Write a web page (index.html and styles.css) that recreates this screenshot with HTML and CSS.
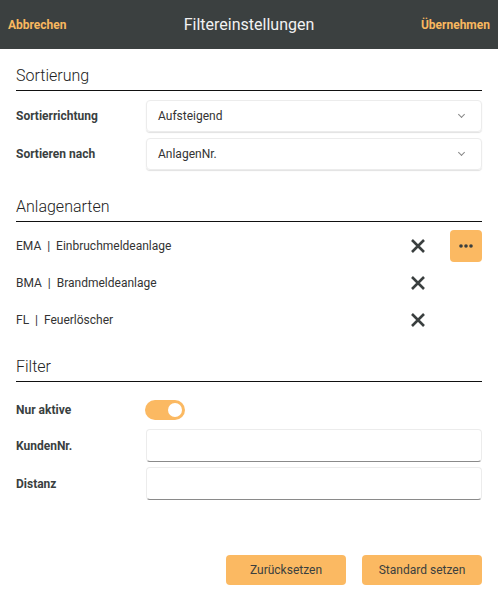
FILE: index.html
```html
<!DOCTYPE html>
<html lang="de">
<head>
  <meta charset="UTF-8" />
  <meta name="viewport" content="width=device-width, initial-scale=1.0" />
  <title>Filtereinstellungen</title>
  <link rel="stylesheet" href="styles.css">
</head>
<body>
  <header class="topbar">
    <a class="bar-link">Abbrechen</a>
    <h1>Filtereinstellungen</h1>
    <a class="bar-link">Übernehmen</a>
  </header>

  <main class="content">
    <section class="section sort">
      <h2>Sortierung</h2>
      <div class="fields">
        <div class="field">
          <label>Sortierrichtung</label>
          <div class="select">Aufsteigend <span class="chevron"></span></div>
        </div>
        <div class="field">
          <label>Sortieren nach</label>
          <div class="select">AnlagenNr. <span class="chevron"></span></div>
        </div>
      </div>
    </section>

    <section class="section kinds">
      <h2>Anlagenarten</h2>
      <ul class="types">
        <li>
          <span class="type-name">EMA&nbsp; | &nbsp;Einbruchmeldeanlage</span>
          <span class="remove"><svg width="16" height="16" viewBox="0 0 16 16"><path d="M2 2L14 14M14 2L2 14" stroke="#3a3f3f" stroke-width="2.6" fill="none"/></svg></span>
          <button class="more"><svg width="14" height="4" viewBox="0 0 14 4"><circle cx="2" cy="2" r="1.8"/><circle cx="7" cy="2" r="1.8"/><circle cx="12" cy="2" r="1.8"/></svg></button>
        </li>
        <li>
          <span class="type-name">BMA&nbsp; | &nbsp;Brandmeldeanlage</span>
          <span class="remove"><svg width="16" height="16" viewBox="0 0 16 16"><path d="M2 2L14 14M14 2L2 14" stroke="#3a3f3f" stroke-width="2.6" fill="none"/></svg></span>
          <span class="more-space"></span>
        </li>
        <li>
          <span class="type-name">FL&nbsp; | &nbsp;Feuerlöscher</span>
          <span class="remove"><svg width="16" height="16" viewBox="0 0 16 16"><path d="M2 2L14 14M14 2L2 14" stroke="#3a3f3f" stroke-width="2.6" fill="none"/></svg></span>
          <span class="more-space"></span>
        </li>
      </ul>
    </section>

    <section class="section">
      <h2>Filter</h2>
      <div class="fields">
        <div class="field toggle-row">
          <label>Nur aktive</label>
          <span class="toggle"><span class="knob"></span></span>
        </div>
        <div class="field input-row">
          <label>KundenNr.</label>
          <input type="text" class="text-input" />
        </div>
        <div class="field">
          <label>Distanz</label>
          <input type="text" class="text-input" />
        </div>
      </div>
    </section>

    <div class="actions">
      <button class="btn">Zurücksetzen</button>
      <button class="btn">Standard setzen</button>
    </div>
  </main>
</body>
</html>
```

FILE: styles.css
```css
* { box-sizing: border-box; }
body, html {
  margin: 0; height: 100%;
  font-family: Roboto, "Liberation Sans", sans-serif;
  color: #3a3f3f; background: #fff;
}
/* Top bar */
.topbar {
  height: 49px; background: #3b4040;
  display: flex; align-items: center; justify-content: space-between;
  padding: 0 8px;
}
.topbar h1 {
  margin: 0; font-size: 16px; font-weight: 400; color: #f2f2f2;
}
.bar-link {
  font-size: 12px; font-weight: 700; color: #f9b85f;
  width: 84px;
}
.bar-link:last-child { text-align: right; }

.content { padding: 17px 16px 0; }
.section { margin-bottom: 25px; }
.section.sort { margin-bottom: 27px; }
.section.kinds { margin-bottom: 21px; }
.section h2 {
  margin: 0; font-size: 16px; font-weight: 300; line-height: 20px;
  color: #222; padding-bottom: 4px; border-bottom: 1px solid #111;
}
.fields {
  display: flex; flex-direction: column; gap: 6px;
  margin-top: 9px;
}
.field { display: flex; align-items: center; }
.field label {
  width: 130px; flex: none;
  font-size: 12px; font-weight: 700; color: #3a3f3f;
}
.select {
  flex: 1; height: 32px; padding: 0 11px;
  display: flex; align-items: center; justify-content: space-between;
  font-size: 12px; color: #333;
  border: 1px solid #ececec; border-radius: 4px;
  box-shadow: 0 1px 1px rgba(0,0,0,0.12);
}
.chevron {
  width: 5px; height: 5px; margin-right: 6px; margin-top: -3px;
  border-right: 1px solid #888; border-bottom: 1px solid #888;
  transform: rotate(45deg);
}
/* Types list */
.types {
  list-style: none; margin: 8px 0 0; padding: 0;
  display: flex; flex-direction: column; gap: 5px;
}
.types li { display: flex; align-items: center; height: 32px; }
.type-name { flex: 1; font-size: 12px; color: #333; }
.remove { width: 16px; height: 16px; margin-right: 24px; }
.more, .more-space { width: 32px; height: 32px; }
.more {
  border: none; border-radius: 4px; background: #fbb962;
  display: flex; align-items: center; justify-content: center; padding: 0;
  fill: #3a3f3f;
}
/* Filter */
.toggle-row { height: 20px; margin-top: 9px; margin-bottom: 3px; }
.input-row { margin-bottom: -1px; }
.toggle {
  width: 40px; height: 20px; border-radius: 10px; background: #fbb962;
  display: flex; align-items: center; justify-content: flex-end;
  padding-right: 3px; margin-left: -1px;
}
.knob { width: 14px; height: 14px; border-radius: 50%; background: #fff; }
.text-input {
  flex: 1; height: 33px; font-size: 12px; outline: none;
  border: 1px solid #ececec; border-bottom: 1px solid #8a8a8a; border-radius: 4px;
}
/* Buttons */
.actions {
  display: flex; justify-content: flex-end; gap: 16px;
  margin-top: 55px;
}
.btn {
  width: 120px; height: 30px; border: none; border-radius: 4px;
  background: #fbb962; color: #3a3f3f;
  font-family: Roboto, sans-serif; font-size: 12px; cursor: pointer;
}
```
